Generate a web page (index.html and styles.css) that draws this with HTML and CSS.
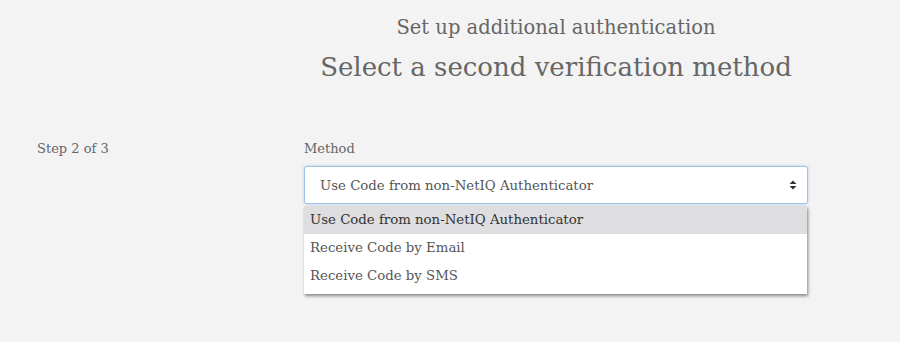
FILE: index.html
```html
<!DOCTYPE html>
<html>
<head>
<meta charset="utf-8">
<link rel="stylesheet" href="styles.css">
</head>
<body>
<div class="page">
  <header class="head">
    <div class="sub">Set up additional authentication</div>
    <h1 class="title">Select a second verification method</h1>
  </header>
  <div class="row">
    <div class="step">Step 2 of 3</div>
    <div class="form">
      <label class="label">Method</label>
      <div class="select">
        <span>Use Code from non-NetIQ Authenticator</span>
        <svg class="caret" width="8" height="10" viewBox="0 0 8 10"><path d="M0.5 4 L4 0.5 L7.5 4 Z M0.5 6 L4 9.5 L7.5 6 Z" fill="#333"/></svg>
      </div>
      <div class="anchor">
        <ul class="menu">
          <li class="opt active">Use Code from non-NetIQ Authenticator</li>
          <li class="opt">Receive Code by Email</li>
          <li class="opt">Receive Code by SMS</li>
        </ul>
      </div>
    </div>
  </div>
</div>
</body>
</html>
```

FILE: styles.css
```css
html, body {
  margin: 0;
  padding: 0;
  background: #f3f3f3;
}
body {
  font-family: "DejaVu Serif", "Liberation Serif", serif;
  color: #555;
  width: 900px;
  height: 342px;
  overflow: hidden;
}
.page {
  display: grid;
  grid-template-columns: 304px 504px;
}
.head {
  grid-column: 2;
  text-align: center;
  padding-top: 15px;
}
.sub {
  font-size: 19.5px;
  line-height: 26px;
  color: #666;
}
.title {
  margin: 9px 0 0;
  font-weight: normal;
  font-size: 26px;
  line-height: 34px;
  color: #666;
}
.row {
  grid-column: 1 / 3;
  display: grid;
  grid-template-columns: 304px 504px;
  margin-top: 55px;
}
.step {
  padding-left: 37px;
  font-size: 13px;
  line-height: 20px;
  color: #666;
}
.label {
  display: block;
  font-size: 13px;
  line-height: 20px;
  color: #666;
  margin-bottom: 7px;
}
.select {
  box-sizing: border-box;
  height: 38px;
  border: 1px solid #9cc3e8;
  border-radius: 3px;
  background: #fff;
  box-shadow: 0 0 3px rgba(102, 160, 220, 0.5);
  display: flex;
  align-items: center;
  justify-content: space-between;
  padding: 0 10px 0 15px;
  font-size: 13.3px;
  color: #555;
}
.anchor {
  position: relative;
}
.menu {
  position: absolute;
  top: 2px;
  left: 0;
  width: 503px;
  margin: 0;
  padding: 0 0 4px;
  list-style: none;
  background: #fff;
  box-shadow: 1px 2px 3px rgba(0, 0, 0, 0.45);
}
.opt {
  height: 28px;
  line-height: 28px;
  padding-left: 6px;
  font-size: 13.3px;
  color: #555;
}
.opt.active {
  background: #dedde0;
  color: #333;
}
```
